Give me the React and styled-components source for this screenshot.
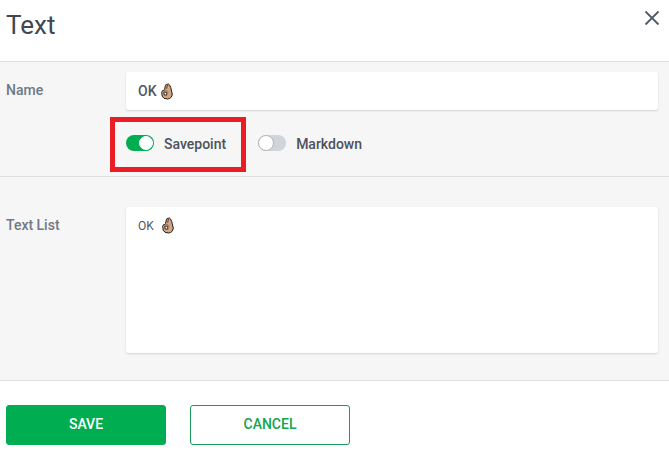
import { useState } from "react";
import styled, { createGlobalStyle } from "styled-components";

const GlobalStyle = createGlobalStyle`
  * {
    box-sizing: border-box;
  }

  body {
    margin: 0;
    background-color: #ffffff;
    font-family: Roboto, "Liberation Sans", sans-serif;
    color: #464e59;
  }
`;

const Dialog = styled.div`
  display: flex;
  flex-direction: column;
  height: 461px;
  overflow: hidden;
`;

const Header = styled.header`
  display: flex;
  justify-content: space-between;
  align-items: flex-start;
  height: 61px;
  padding: 9px 9px 0 6px;
`;

const Title = styled.h1`
  margin: 0;
  font-size: 26px;
  font-weight: 400;
  line-height: 32px;
  color: #414751;
`;

const CloseButton = styled.button`
  display: flex;
  padding: 0;
  margin-top: 1px;
  border: none;
  background: transparent;
  color: #505c69;
  cursor: pointer;
`;

const Section = styled.section`
  display: flex;
  border-top: 1px solid #dcdee0;
  background-color: #f6f6f6;
  height: ${(props) => props.$height};
  padding: ${(props) => props.$padding};
`;

const Label = styled.label`
  width: 120px;
  flex-shrink: 0;
  padding-top: 8px;
  font-size: 14px;
  font-weight: 500;
  line-height: 20px;
  color: #707885;
`;

const Fields = styled.div`
  flex: 1;
`;

const Field = styled.div`
  display: flex;
  align-items: ${(props) => (props.$multiline ? "flex-start" : "center")};
  gap: ${(props) => (props.$multiline ? "8px" : "4px")};
  height: ${(props) => (props.$multiline ? "146px" : "38px")};
  padding: ${(props) => (props.$multiline ? "9px 12px" : "0 12px")};
  border-radius: 2px;
  background-color: #ffffff;
  box-shadow: 0 1px 2px rgba(0, 0, 0, 0.14);
  font-size: ${(props) => (props.$multiline ? "12px" : "14px")};
  font-weight: ${(props) => (props.$multiline ? 400 : 500)};
  line-height: 20px;
  color: #505761;
`;

const Toggles = styled.div`
  display: flex;
  gap: 32px;
  padding-top: 23px;
`;

const ToggleLabel = styled.label`
  position: relative;
  display: flex;
  align-items: center;
  gap: 10px;
  height: 20px;
  font-size: 14px;
  font-weight: 500;
  color: #4b525d;
  cursor: pointer;
`;

const ToggleText = styled.span`
  padding-top: 2px;
`;

const Track = styled.button`
  display: flex;
  align-items: center;
  justify-content: ${(props) => (props.$on ? "flex-end" : "flex-start")};
  width: 28px;
  height: 16px;
  padding: ${(props) => (props.$on ? "1px" : "0")};
  border: none;
  border-radius: 8px;
  background-color: ${(props) => (props.$on ? "#00ad50" : "#cfd5da")};
  cursor: pointer;
`;

const Knob = styled.span`
  width: ${(props) => (props.$on ? "14px" : "16px")};
  height: ${(props) => (props.$on ? "14px" : "16px")};
  border: 1px solid ${(props) => (props.$on ? "#ffffff" : "#b1b6ba")};
  border-radius: 50%;
  background-color: #ffffff;
`;

const Highlight = styled.span`
  position: absolute;
  inset: -16px -20px -19px -16px;
  border: 5px solid #ec1c24;
  pointer-events: none;
`;

const Footer = styled.footer`
  display: flex;
  gap: 24px;
  border-top: 1px solid #dcdee0;
  padding: 24px 6px 0;
`;

const Button = styled.button`
  width: 160px;
  height: 40px;
  padding: 0 0 2px;
  border: 1px solid ${(props) => (props.$primary ? "#00ad50" : "#169a56")};
  border-radius: 3px;
  background-color: ${(props) => (props.$primary ? "#00ad50" : "#ffffff")};
  color: ${(props) => (props.$primary ? "#ffffff" : "#12a550")};
  font-family: inherit;
  font-size: 14px;
  font-weight: 500;
  cursor: pointer;
`;

const HandSvg = styled.svg`
  margin-top: ${(props) => (props.$lowered ? "1px" : "0")};
`;

const OkHand = ({ lowered }) => (
  <HandSvg $lowered={lowered} width="12" height="17" viewBox="0 0 12 17" aria-hidden="true">
    <path
      d="M3.6 6.6 4.3 2.8Q5 .8 6.2 1.3 7.4 .4 8.4 1.8L9.7 4.4 10.5 8 11.3 11Q10.9 15.6 6.5 16 2.3 16 1.2 13.2L.7 9.4Q1 7.1 3.2 7.2Z"
      fill="#d3a582"
      stroke="#211b18"
      strokeWidth="1"
      strokeLinejoin="round"
    />
    <path
      d="M6.4 2 5.7 5.6"
      stroke="#33271f"
      strokeWidth=".8"
      fill="none"
    />
    <path
      d="M2.8 9.2H5.8V12H3.2Z"
      fill="#ffffff"
      stroke="#2f241f"
      strokeWidth="1"
      strokeLinejoin="round"
    />
    <path d="M3.4 7.5Q6.6 6.7 7.4 9.5" fill="none" stroke="#8a6650" strokeWidth=".6" />
  </HandSvg>
);

const CloseIcon = () => (
  <svg width="16" height="16" viewBox="0 0 16 16" aria-hidden="true">
    <path d="M1.5 1.5 14.5 14.5M14.5 1.5 1.5 14.5" stroke="currentColor" strokeWidth="1.8" />
  </svg>
);

const Toggle = ({ label, on, onChange, highlighted }) => (
  <ToggleLabel>
    <Track type="button" role="switch" aria-checked={on} $on={on} onClick={onChange}>
      <Knob $on={on} />
    </Track>
    <ToggleText>{label}</ToggleText>
    {highlighted && <Highlight />}
  </ToggleLabel>
);

const App = () => {
  const [savepoint, setSavepoint] = useState(true);
  const [markdown, setMarkdown] = useState(false);

  return (
    <>
      <GlobalStyle />
      <Dialog>
        <Header>
          <Title>Text</Title>
          <CloseButton type="button">
            <CloseIcon />
          </CloseButton>
        </Header>
        <Section $height="115px" $padding="10px 11px 0 6px">
          <Label>Name</Label>
          <Fields>
            <Field>
              OK
              <OkHand />
            </Field>
            <Toggles>
              <Toggle
                label="Savepoint"
                on={savepoint}
                onChange={() => setSavepoint(!savepoint)}
                highlighted
              />
              <Toggle
                label="Markdown"
                on={markdown}
                onChange={() => setMarkdown(!markdown)}
              />
            </Toggles>
          </Fields>
        </Section>
        <Section $height="204px" $padding="30px 11px 0 6px">
          <Label>Text List</Label>
          <Fields>
            <Field $multiline>
              OK
              <OkHand lowered />
            </Field>
          </Fields>
        </Section>
        <Footer>
          <Button type="button" $primary>
            SAVE
          </Button>
          <Button type="button">CANCEL</Button>
        </Footer>
      </Dialog>
    </>
  );
};

export default App;
